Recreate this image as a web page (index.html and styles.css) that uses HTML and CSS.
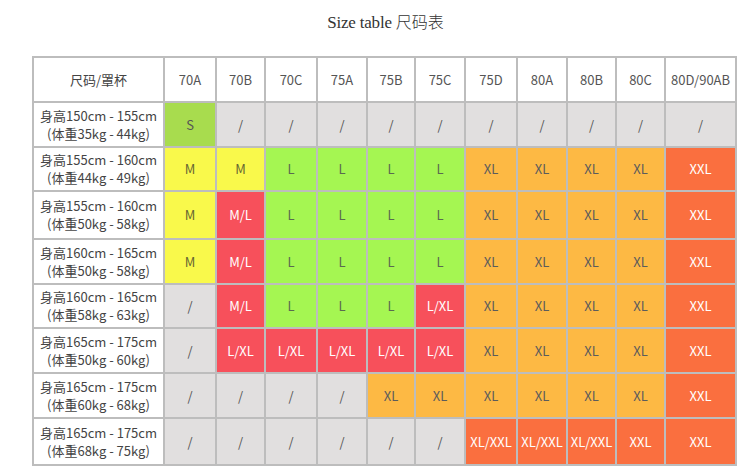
FILE: index.html
```html
<!DOCTYPE html>
<html lang="zh">
<head>
<meta charset="utf-8">
<title>Size table</title>
<link rel="stylesheet" href="styles.css">
</head>
<body>
<div class="page">
  <h1 class="title"><span class="title-en">Size table</span><span class="title-zh">尺码表</span></h1>
  <div class="table">
    <div class="c head label">尺码/罩杯</div>
    <div class="c head">70A</div>
    <div class="c head">70B</div>
    <div class="c head">70C</div>
    <div class="c head">75A</div>
    <div class="c head">75B</div>
    <div class="c head">75C</div>
    <div class="c head">75D</div>
    <div class="c head">80A</div>
    <div class="c head">80B</div>
    <div class="c head">80C</div>
    <div class="c head">80D/90AB</div>

    <div class="c label">身高150cm - 155cm<br>(体重35kg - 44kg)</div>
    <div class="c s">S</div>
    <div class="c na">/</div><div class="c na">/</div><div class="c na">/</div><div class="c na">/</div><div class="c na">/</div>
    <div class="c na">/</div><div class="c na">/</div><div class="c na">/</div><div class="c na">/</div><div class="c na">/</div>

    <div class="c label">身高155cm - 160cm<br>(体重44kg - 49kg)</div>
    <div class="c m">M</div><div class="c m">M</div>
    <div class="c l">L</div><div class="c l">L</div><div class="c l">L</div><div class="c l">L</div>
    <div class="c xl">XL</div><div class="c xl">XL</div><div class="c xl">XL</div><div class="c xl">XL</div>
    <div class="c xxl">XXL</div>

    <div class="c label">身高155cm - 160cm<br>(体重50kg - 58kg)</div>
    <div class="c m">M</div><div class="c ml">M/L</div>
    <div class="c l">L</div><div class="c l">L</div><div class="c l">L</div><div class="c l">L</div>
    <div class="c xl">XL</div><div class="c xl">XL</div><div class="c xl">XL</div><div class="c xl">XL</div>
    <div class="c xxl">XXL</div>

    <div class="c label">身高160cm - 165cm<br>(体重50kg - 58kg)</div>
    <div class="c m">M</div><div class="c ml">M/L</div>
    <div class="c l">L</div><div class="c l">L</div><div class="c l">L</div><div class="c l">L</div>
    <div class="c xl">XL</div><div class="c xl">XL</div><div class="c xl">XL</div><div class="c xl">XL</div>
    <div class="c xxl">XXL</div>

    <div class="c label">身高160cm - 165cm<br>(体重58kg - 63kg)</div>
    <div class="c na">/</div><div class="c ml">M/L</div>
    <div class="c l">L</div><div class="c l">L</div><div class="c l">L</div><div class="c ml">L/XL</div>
    <div class="c xl">XL</div><div class="c xl">XL</div><div class="c xl">XL</div><div class="c xl">XL</div>
    <div class="c xxl">XXL</div>

    <div class="c label">身高165cm - 175cm<br>(体重50kg - 60kg)</div>
    <div class="c na">/</div>
    <div class="c ml">L/XL</div><div class="c ml">L/XL</div><div class="c ml">L/XL</div><div class="c ml">L/XL</div><div class="c ml">L/XL</div>
    <div class="c xl">XL</div><div class="c xl">XL</div><div class="c xl">XL</div><div class="c xl">XL</div>
    <div class="c xxl">XXL</div>

    <div class="c label">身高165cm - 175cm<br>(体重60kg - 68kg)</div>
    <div class="c na">/</div><div class="c na">/</div><div class="c na">/</div><div class="c na">/</div>
    <div class="c xl">XL</div><div class="c xl">XL</div>
    <div class="c xl">XL</div><div class="c xl">XL</div><div class="c xl">XL</div><div class="c xl">XL</div>
    <div class="c xxl">XXL</div>

    <div class="c label">身高165cm - 175cm<br>(体重68kg - 75kg)</div>
    <div class="c na">/</div><div class="c na">/</div><div class="c na">/</div><div class="c na">/</div><div class="c na">/</div><div class="c na">/</div>
    <div class="c xxl">XL/XXL</div><div class="c xxl">XL/XXL</div><div class="c xxl">XL/XXL</div><div class="c xxl">XXL</div>
    <div class="c xxl">XXL</div>
  </div>
</div>
</body>
</html>
```

FILE: styles.css
```css
html, body {
  margin: 0;
  padding: 0;
  background: #ffffff;
}

.page {
  width: 705px;
  margin-left: 32px;
  padding-top: 11px;
}

.title {
  display: flex;
  justify-content: center;
  align-items: baseline;
  gap: 4px;
  margin: 0 0 18px 0;
  padding-left: 2px;
  height: 27px;
  line-height: 20px;
  font-weight: normal;
  color: #333333;
  white-space: nowrap;
}

.title-en {
  font-family: "Liberation Serif", "Times New Roman", serif;
  font-size: 17px;
  letter-spacing: -0.2px;
}

.title-zh {
  font-family: "Noto Sans CJK SC", sans-serif;
  font-size: 16px;
  font-weight: 300;
}

.table {
  display: grid;
  grid-template-columns: 129px 50px 47px 50px 48px 46px 48px 50px 48px 47px 47px 69px;
  grid-template-rows: 43px 43px 42px 46px 43px 42px 43px 43px 45px;
  gap: 2px;
  padding: 2px;
  background: #bdbdbd;
  width: max-content;
  font-family: "Noto Sans CJK SC", "Noto Sans", sans-serif;
  font-size: 13px;
  color: #555555;
}

.c {
  display: flex;
  align-items: center;
  justify-content: center;
  text-align: center;
  line-height: 18px;
  white-space: nowrap;
  background: #ffffff;
}

.head {
  background: #ffffff;
  color: #555555;
  font-size: 13px;
}

.label {
  background: #ffffff;
  color: #444444;
  line-height: 18px;
}

.na {
  background: #e1dfdf;
  color: #555555;
}

.s {
  background: #a8dc4e;
  color: #555555;
}

.l {
  background: #a5f652;
  color: #5a6a50;
}

.m {
  background: #f9f94b;
  color: #666633;
}

.ml {
  background: #f7505b;
  color: #ffffff;
}

.xl {
  background: #fdb944;
  color: #5c5c5c;
}

.xxl {
  background: #fa6f3f;
  color: #ffffff;
}
```
